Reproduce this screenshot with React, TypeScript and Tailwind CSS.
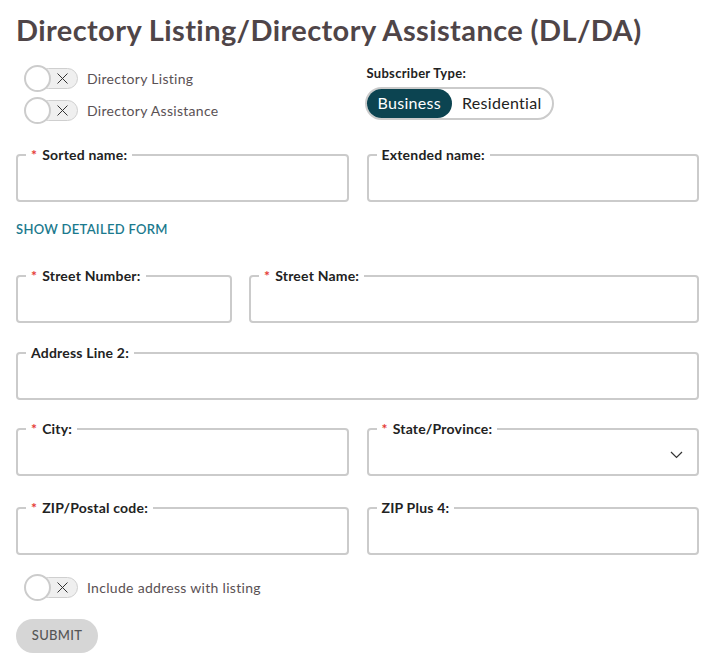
import { useState } from 'react';

function Toggle({ label }: { label: string }) {
  const [on, setOn] = useState(false);
  return (
    <label className="flex items-center gap-[9px] cursor-pointer select-none">
      <button
        type="button"
        onClick={() => setOn(!on)}
        className="relative w-[54px] h-[27px] flex items-center"
      >
        <span className="absolute left-[14px] right-0 top-[3px] h-[21px] rounded-full bg-[#efefef] border border-[#cfcfcf]" />
        <svg className="absolute left-[33px] top-[8px]" width="11" height="11" viewBox="0 0 11 11">
          <path d="M0.5 0.5L10.5 10.5M10.5 0.5L0.5 10.5" stroke="#333" strokeWidth="1" fill="none" />
        </svg>
        <span className="absolute left-0 top-0 w-[27px] h-[27px] rounded-full bg-white border-2 border-[#cccccc]" />
      </button>
      <span className="text-[14px] tracking-[0.3px] text-[#5a5154]">{label}</span>
    </label>
  );
}

function Field({
  label,
  required,
  select,
  className = '',
}: {
  label: string;
  required?: boolean;
  select?: boolean;
  className?: string;
}) {
  return (
    <fieldset className={`relative border-2 border-[#cbcbcb] rounded-[4px] px-2 ${className}`}>
      <legend className="px-[5px] text-[14px] leading-4 font-bold text-[#222] tracking-[0.2px]">
        {required && <span className="text-[#e53935] mr-[5px]">*</span>}
        {label}
      </legend>
      <input className="w-full h-[37px] outline-none bg-transparent text-[14px]" />
      {select && (
        <svg className="absolute right-[14px] top-[14px]" width="13" height="8" viewBox="0 0 13 8">
          <path d="M1 1L6.5 6.5L12 1" stroke="#333" strokeWidth="1.2" fill="none" />
        </svg>
      )}
    </fieldset>
  );
}

export default function App() {
  const [type, setType] = useState<'Business' | 'Residential'>('Business');

  return (
    <div
      className="bg-white min-h-screen pl-4 pr-[17px] pt-[12px] pb-4"
      style={{ fontFamily: 'Lato, "Noto Sans", sans-serif' }}
    >
      <h1 className="text-[29px] leading-9 font-bold text-[#4f4548] tracking-[0.4px] mb-[17px]">
        Directory Listing/Directory Assistance (DL/DA)
      </h1>

      <div className="grid grid-cols-2 gap-x-[18px] pl-2">
        <div className="flex flex-col gap-[5px]">
          <Toggle label="Directory Listing" />
          <Toggle label="Directory Assistance" />
        </div>
        <div className="-mt-[1px] -ml-[6px]">
          <div className="pl-[2px] text-[13px] font-bold text-[#222] tracking-[0.3px] mb-[3px]">Subscriber Type:</div>
          <div className="inline-flex border-2 border-[#cbcbcb] rounded-full">
            {(['Business', 'Residential'] as const).map((t) => (
              <button
                key={t}
                type="button"
                onClick={() => setType(t)}
                className={`h-[29px] rounded-full text-[16px] tracking-[0.3px] ${
                  type === t ? 'bg-[#0c4451] text-white px-[11px]' : 'text-[#222] px-[10px]'
                }`}
              >
                {t}
              </button>
            ))}
          </div>
        </div>
      </div>

      <div className="grid grid-cols-2 gap-x-[18px] mt-[23px]">
        <Field label="Sorted name:" required />
        <Field label="Extended name:" />
      </div>

      <button type="button" className="mt-[18px] text-[13px] font-semibold tracking-[0.3px] text-[#1b7a8e]">
        SHOW DETAILED FORM
      </button>

      <div className="flex gap-[17px] mt-[28px]">
        <Field label="Street Number:" required className="w-[216px] shrink-0" />
        <Field label="Street Name:" required className="flex-1" />
      </div>

      <Field label="Address Line 2:" className="mt-[22px]" />

      <div className="grid grid-cols-2 gap-x-[18px] mt-[21px]">
        <Field label="City:" required />
        <Field label="State/Province:" required select />
      </div>

      <div className="grid grid-cols-2 gap-x-[18px] mt-[24px]">
        <Field label="ZIP/Postal code:" required />
        <Field label="ZIP Plus 4:" />
      </div>

      <div className="mt-[19px] pl-2">
        <Toggle label="Include address with listing" />
      </div>

      <button
        type="button"
        className="mt-[18px] h-[34px] w-[82px] rounded-full bg-[#d6d6d6] text-[13px] font-medium tracking-[0.3px] text-[#555]"
      >
        SUBMIT
      </button>
    </div>
  );
}
